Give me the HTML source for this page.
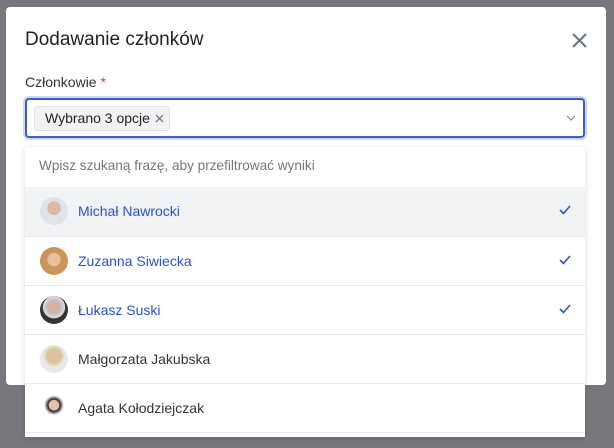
<!DOCTYPE html><html><head><style>
body{margin:0;width:614px;height:448px;background:#77787d;font-family:"Liberation Sans",sans-serif;position:relative;overflow:hidden}
.modal{position:absolute;left:6px;top:7px;width:600px;height:378px;background:#fff;border-radius:4px}
.t{position:absolute;left:25px;top:29px;font-size:19px;color:#222}
.x{position:absolute;left:572px;top:33px}
.lbl{position:absolute;left:25px;top:74px;font-size:14px;color:#333}
.inp{position:absolute;left:25px;top:98px;width:556px;height:36px;border:2px solid #3b5bd8;border-radius:4px;box-shadow:0 0 0 2px #cdd6f5;background:#fff}
.chip{position:absolute;left:34px;top:106px;width:136px;height:25px;background:#f1f2f4;border:1px solid #e3e4e8;border-radius:3px;font-size:14px;color:#222;line-height:23px;box-sizing:border-box;padding-left:10px;white-space:nowrap}
.cx{position:absolute;left:155px;top:114px}
.dd{position:absolute;left:25px;top:147px;width:560px;height:290px;background:#fff;box-shadow:0 2px 6px rgba(0,0,0,.15)}
.s{height:40px;line-height:38px;padding-left:14px;font-size:13.6px;color:#777}
.r{height:48px;border-top:1px solid #e8e9ec;position:relative;font-size:14px;color:#333}
.r span{position:absolute;left:53px;top:16px}
.r.sel span{color:#2a4ee0}
.av{position:absolute;left:15px;top:10px;width:28px;height:28px;border-radius:50%}
.ck{position:absolute;right:14px;top:18px}
</style></head><body>
<div class="modal"></div>
<div class="t">Dodawanie członków</div>
<svg class="x" width="15" height="15" viewBox="0 0 15 15"><path d="M1 1L14 14M14 1L1 14" stroke="#6b7380" stroke-width="2"/></svg>
<div class="lbl">Członkowie <span style="color:#e33">*</span></div>
<div class="inp"></div>
<div class="chip">Wybrano 3 opcje</div>
<svg class="cx" width="9" height="9" viewBox="0 0 9 9"><path d="M1 1L8 8M8 1L1 8" stroke="#667" stroke-width="1.2"/></svg>
<svg style="position:absolute;left:566px;top:115px" width="10" height="7" viewBox="0 0 10 7"><path d="M1 1L5 5L9 1" stroke="#889" fill="none" stroke-width="1.2"/></svg>
<div class="dd">
<div class="s">Wpisz szukaną frazę, aby przefiltrować wyniki</div>
<div class="r sel" style="background:#f2f3f5;border-top:none;height:49px"><div class="av" style="background:radial-gradient(circle at 50% 40%,#e0b8a0 30%,#dfe3ea 32%)"></div><span>Michał Nawrocki</span><svg class="ck" width="12" height="10"><path d="M1 5L4.5 8.5L11 1" stroke="#2a4ee0" fill="none" stroke-width="1.6"/></svg></div>
<div class="r sel"><div class="av" style="background:radial-gradient(circle at 50% 45%,#e8c0a0 30%,#c8955a 34%)"></div><span>Zuzanna Siwiecka</span><svg class="ck" width="12" height="10"><path d="M1 5L4.5 8.5L11 1" stroke="#2a4ee0" fill="none" stroke-width="1.6"/></svg></div>
<div class="r sel"><div class="av" style="background:radial-gradient(circle at 50% 40%,#d8b0a0 25%,#bbb 28%,#ddd 50%,#333 52%)"></div><span>Łukasz Suski</span><svg class="ck" width="12" height="10"><path d="M1 5L4.5 8.5L11 1" stroke="#2a4ee0" fill="none" stroke-width="1.6"/></svg></div>
<div class="r"><div class="av" style="background:radial-gradient(circle at 50% 40%,#e0c0a0 25%,#d9c48a 30%,#e8e8e8 50%)"></div><span>Małgorzata Jakubska</span></div>
<div class="r"><div class="av" style="background:radial-gradient(circle at 50% 40%,#e4c0a8 22%,#2a2222 27%,#fff 45%)"></div><span>Agata Kołodziejczak</span></div>
<div class="r" style="height:4px"></div>
</div>
</body></html>
